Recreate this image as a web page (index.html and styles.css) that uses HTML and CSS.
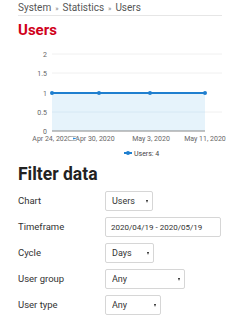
FILE: index.html
```html
<!DOCTYPE html>
<html lang="en-US">
  <head>
    <meta charset="utf-8"/>
    <title>Statistics: Users</title>
    <link rel="stylesheet" href="styles.css">
  </head>

  <body>
    <div class="page">
      <nav class="crumbs">
        <a href="#">System</a><span class="sep">»</span><a href="#">Statistics</a><span class="sep">»</span><span>Users</span>
      </nav>

      <h1 class="title">Users</h1>

      <div class="chart">
        <svg width="212" height="118" viewBox="0 0 212 118">
          <g class="grid">
            <line x1="34" y1="10" x2="204" y2="10"/>
            <line x1="34" y1="29" x2="204" y2="29"/>
            <line x1="34" y1="68" x2="204" y2="68"/>
          </g>
          <rect class="area" x="34" y="49" width="153" height="38"/>
          <line class="grid-in" x1="34" y1="68" x2="187" y2="68"/>
          <line class="axis" x1="34" y1="87" x2="187" y2="87"/>
          <g class="ylabels">
            <text x="29" y="12.5">2</text>
            <text x="29" y="31.5">1.5</text>
            <text x="29" y="51.5">1</text>
            <text x="29" y="70.5">0.5</text>
            <text x="29" y="89.5">0</text>
          </g>
          <g class="xlabels">
            <text x="34" y="97">Apr 24, 2020</text>
            <text x="77" y="97">Apr 30, 2020</text>
            <text x="133" y="97">May 3, 2020</text>
            <text x="187" y="97">May 11, 2020</text>
          </g>
          <rect class="handle" x="50" y="92.5" width="9" height="4" rx="2"/>
          <path class="handle-arrow" d="M55 93.5 L59 94.5 L55 95.5 Z"/>
          <polyline class="line" points="34,49 81,49 132,49 187,49"/>
          <g class="dots">
            <circle cx="34" cy="49" r="2"/>
            <circle cx="81" cy="49" r="2"/>
            <circle cx="132" cy="49" r="2"/>
            <circle cx="187" cy="49" r="2"/>
          </g>
          <line class="line" x1="106" y1="109" x2="114" y2="109"/>
          <circle class="dot" cx="110" cy="109" r="2"/>
          <text class="legend" x="116" y="111.5">Users: 4</text>
        </svg>
      </div>

      <h2 class="subtitle">Filter data</h2>

      <form class="filters">
        <label for="chart">Chart</label>
        <div class="select w-users">
          <select id="chart" name="chart">
            <option>Users</option>
          </select>
        </div>

        <label for="timeframe">Timeframe</label>
        <input type="text" id="timeframe" name="timeframe" class="field" value="2020/04/19 - 2020/05/19">

        <label for="cycle">Cycle</label>
        <div class="select w-days">
          <select id="cycle" name="cycle">
            <option>Days</option>
          </select>
        </div>

        <label for="group">User group</label>
        <div class="select w-group">
          <select id="group" name="group">
            <option>Any</option>
          </select>
        </div>

        <label for="type">User type</label>
        <div class="select w-type">
          <select id="type" name="type">
            <option>Any</option>
          </select>
        </div>
      </form>
    </div>
  </body>

</html>
```

FILE: styles.css
```css
* {
  box-sizing: border-box;
}

body {
  background-color: #fff;
  color: #333;
  font: 9px / 1.4 Roboto, "Liberation Sans", Arial, sans-serif;
  margin: 0;
}

.page {
  margin: 0 18px;
}

.crumbs {
  height: 16px;
  padding-top: 1px;
  line-height: 14px;
  font-size: 10px;
  border-bottom: 1px solid #e6e6e6;
  color: #555;
}

.crumbs a {
  color: #555;
  text-decoration: none;
}

.crumbs .sep {
  font-size: 7px;
  margin: 0 4px;
  color: #888;
}

.title {
  margin: 5px 0 0;
  font-size: 15px;
  line-height: 18px;
  color: #d0021b;
}

.chart {
  margin-top: 5px;
  height: 118px;
}

.chart svg {
  display: block;
}

.grid line {
  stroke: #f0f0f0;
  stroke-width: 1;
}

.grid-in {
  stroke: #d6e8f4;
  stroke-width: 1;
}

.area {
  fill: #e6f3fb;
}

.axis {
  stroke: #888;
  stroke-width: 1;
}

.ylabels text {
  font-size: 7px;
  fill: #666;
  text-anchor: end;
}

.xlabels text {
  font-size: 7px;
  fill: #666;
  text-anchor: middle;
}

.handle {
  fill: #fff;
  stroke: #999;
  stroke-width: 0.7;
}

.handle-arrow {
  fill: #2a88d8;
}

.line {
  fill: none;
  stroke: #1f7fcf;
  stroke-width: 2;
}

.dots circle,
.dot {
  fill: #1f7fcf;
}

.legend {
  font-size: 7px;
  fill: #444;
}

.subtitle {
  margin: 0;
  font-size: 17.5px;
  line-height: 24px;
  color: #222;
}

.filters {
  display: grid;
  grid-template-columns: 87px auto;
  grid-auto-rows: 20px;
  row-gap: 6px;
  align-items: center;
  justify-items: start;
  margin-top: 5px;
}

.filters label {
  font-size: 9.5px;
  color: #333;
}

.field,
.select select {
  height: 20px;
  border: 1px solid #d6d6d6;
  border-radius: 2px;
  background: #fff;
  font: inherit;
  font-size: 9px;
  color: #333;
  padding: 0 6px;
  margin: 0;
}

.field {
  width: 116px;
  font-size: 8px;
  padding: 0 5px;
}

.select {
  position: relative;
  height: 20px;
}

.select select {
  appearance: none;
  -webkit-appearance: none;
  width: 100%;
  outline: none;
}

.select::after {
  content: "";
  position: absolute;
  right: 5px;
  top: 9px;
  border-left: 1.5px solid transparent;
  border-right: 1.5px solid transparent;
  border-top: 3px solid #222;
  pointer-events: none;
}

.w-users { width: 48px; }
.w-days { width: 49px; }
.w-group { width: 80px; }
.w-type { width: 56px; }
```
